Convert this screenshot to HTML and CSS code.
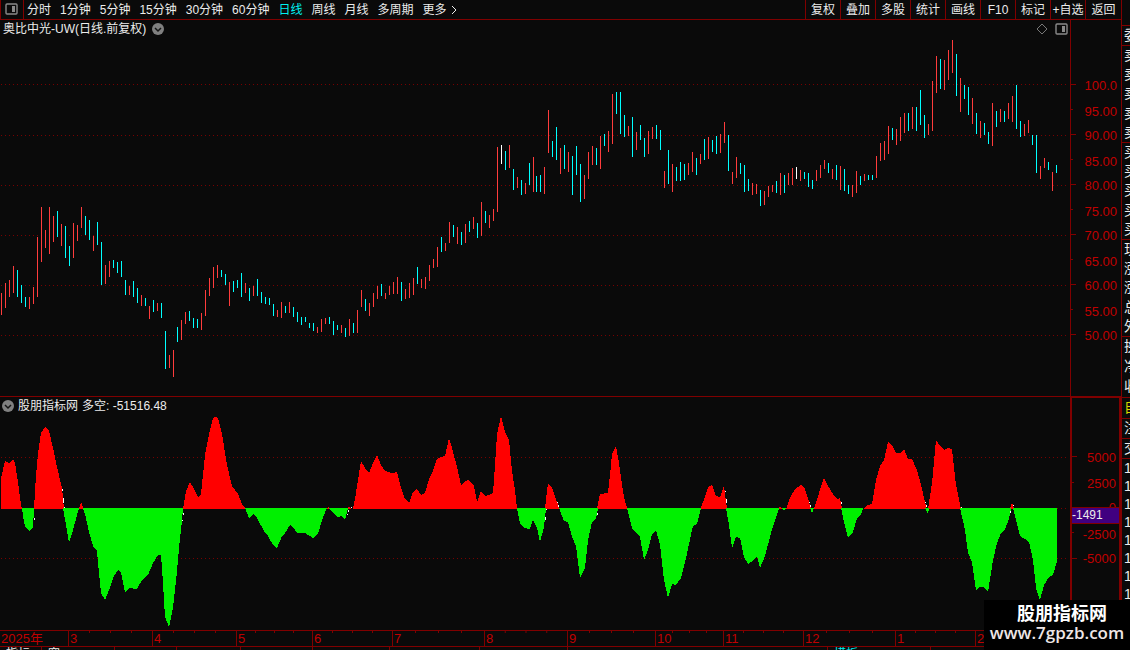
FILE: index.html
```html
<!DOCTYPE html>
<html lang="zh-CN">
<head>
<meta charset="utf-8">
<title>奥比中光-UW 日线</title>
<link rel="stylesheet" href="styles.css">
</head>
<body>
<div class="terminal">
  <main class="workspace">
    <header class="toolbar">
      <button class="layout-toggle" type="button" aria-label="切换布局">
        <svg class="icon-panel" viewBox="0 0 13 12" aria-hidden="true"><rect class="frame" x="1" y="1" width="11" height="10" rx="1"/><rect class="fill" x="7" y="3" width="3" height="6"/></svg>
      </button>
      <nav class="periods">
        <button type="button">分时</button>
        <button type="button">1分钟</button>
        <button type="button">5分钟</button>
        <button type="button">15分钟</button>
        <button type="button">30分钟</button>
        <button type="button">60分钟</button>
        <button type="button" class="active">日线</button>
        <button type="button">周线</button>
        <button type="button">月线</button>
        <button type="button">多周期</button>
        <button type="button" class="more">更多<svg viewBox="0 0 6 10" aria-hidden="true"><path d="M1 1L5 5L1 9"/></svg></button>
      </nav>
      <div class="tools">
        <button type="button">复权</button>
        <button type="button">叠加</button>
        <button type="button">多股</button>
        <button type="button">统计</button>
        <button type="button">画线</button>
        <button type="button">F10</button>
        <button type="button">标记</button>
        <button type="button">+自选</button>
        <button type="button">返回</button>
      </div>
    </header>

    <section class="pane price-pane">
      <div class="plot">
        <div class="legend">
          <span>奥比中光-UW(日线.前复权)</span>
          <button class="round" type="button" aria-label="展开"><svg viewBox="0 0 12 12" aria-hidden="true"><circle cx="6" cy="6" r="6"/><path d="M3 5L6 8L9 5"/></svg></button>
          <span class="legend-actions">
            <svg class="icon-diamond" viewBox="0 0 12 12" aria-hidden="true"><path d="M6 1L11 6L6 11L1 6Z"/></svg>
            <svg class="icon-panel" viewBox="0 0 13 12" aria-hidden="true"><rect class="frame" x="1" y="1" width="11" height="10" rx="1"/><rect class="fill" x="7" y="3" width="3" height="6"/></svg>
          </span>
        </div>
        <svg class="chart" id="price" viewBox="0 38 1070 358" preserveAspectRatio="none" role="img" aria-label="日线价格"></svg>
      </div>
      <div class="axis price-axis">
        <span>100.0</span><span>95.00</span><span>90.00</span><span>85.00</span><span>80.00</span><span>75.00</span><span>70.00</span><span>65.00</span><span>60.00</span><span>55.00</span><span>50.00</span>
      </div>
    </section>

    <section class="pane index-pane">
      <div class="plot">
        <div class="legend">
          <button class="round" type="button" aria-label="指标菜单"><svg viewBox="0 0 12 12" aria-hidden="true"><circle cx="6" cy="6" r="6"/><path d="M3 5L6 8L9 5"/></svg></button>
          <span>股朋指标网</span>
          <span>多空: -51516.48</span>
        </div>
        <svg class="chart" id="index" viewBox="0 414 1070 216" preserveAspectRatio="none" role="img" aria-label="多空指标"></svg>
      </div>
      <div class="axis index-axis">
        <span>5000</span><span>2500</span><span class="zero">0<b class="badge">-1491</b></span><span>-2500</span><span>-5000</span>
      </div>
    </section>

    <div class="months">
      <span>2025年</span><span>3</span><span>4</span><span>5</span><span>6</span><span>7</span><span>8</span><span>9</span><span>10</span><span>11</span><span>12</span><span>1</span><span>2</span>
    </div>
    <div class="tabs">
      <span>指标</span><span>窗</span><span></span><span></span><span></span><span></span><span></span><span></span><span></span><span class="current">模板</span><span></span>
    </div>
  </main>

  <aside class="quotes">
    <div class="group head"><span>委</span></div>
    <div class="group"><span>卖</span><span>卖</span><span>卖</span><span>卖</span><span>卖</span></div>
    <div class="group"><span>买</span><span>买</span><span>买</span><span>买</span><span>买</span></div>
    <div class="group"><span>现</span><span>涨</span><span>涨</span><span>总</span><span>外</span></div>
    <div class="group short"><span>换</span><span>净</span><span>收</span></div>
    <div class="group own"><span>自</span></div>
    <div class="group single"><span>注</span></div>
    <div class="group single"><span>交</span></div>
    <div class="group ticks"><span>1</span><span>1</span><span>1</span><span>1</span><span>1</span><span>1</span><span>1</span><span>1</span></div>
  </aside>

  <div class="watermark"><strong>股朋指标网</strong><span>www.7gpzb.com</span></div>
</div>
<script src="chart.js"></script>
</body>
</html>
```

FILE: styles.css
```css
* { box-sizing: border-box; }

body {
  margin: 0;
  background: #0a0a0a;
  color: #ececec;
  font: 12px/18px "Liberation Sans", "Noto Sans CJK SC", sans-serif;
}

button {
  margin: 0;
  padding: 0;
  border: 0;
  background: none;
  color: inherit;
  font: inherit;
  white-space: nowrap;
}

svg { display: block; }

.terminal {
  position: relative;
  display: grid;
  grid-template-columns: minmax(0, 1fr) 9px;
  height: 100vh;
  overflow: hidden;
}

.workspace {
  display: grid;
  grid-template-rows: 20px minmax(0, 376fr) minmax(0, 234fr) 16px 4px;
  min-width: 0;
}

.toolbar {
  display: flex;
  border-bottom: 1px solid #800000;
}

.layout-toggle {
  display: flex;
  align-items: center;
  justify-content: center;
  width: 24px;
  padding: 0 2px 2px 0;
  border: solid #800000;
  border-width: 0 1px;
}

.icon-panel { width: 13px; height: 12px; }
.icon-panel .frame { fill: none; stroke: #8a8a8a; stroke-width: 1.4; }
.icon-panel .fill { fill: #8a8a8a; }

.periods {
  display: flex;
  gap: 9px;
  padding-left: 3px;
}

.periods .active { color: #00f0f0; }

.more {
  display: flex;
  align-items: center;
  gap: 4px;
}

.more svg {
  width: 6px;
  height: 10px;
  fill: none;
  stroke: #ececec;
}

.tools {
  display: flex;
  margin-left: auto;
}

.tools button {
  width: 35px;
  border-left: 1px solid #800000;
}

.tools button:last-child { width: 36px; }

.pane {
  display: grid;
  grid-template-columns: minmax(0, 1fr) 51px;
  min-height: 0;
}

.index-pane { border-top: 1px solid #800000; }

.plot {
  display: flex;
  flex-direction: column;
  min-height: 0;
}

.legend {
  display: flex;
  flex: none;
  align-items: center;
  gap: 6px;
  height: 18px;
  padding: 0 2px 0 3px;
}

.index-pane .legend {
  gap: 4px;
  height: 17px;
  padding-left: 2px;
}

.round { width: 12px; height: 12px; }
.round circle { fill: #808080; }
.round path { fill: none; stroke: #151515; stroke-width: 1.5; }

.legend-actions {
  display: flex;
  align-items: center;
  gap: 7px;
  margin-left: auto;
}

.icon-diamond {
  width: 12px;
  height: 12px;
  fill: none;
  stroke: #777;
}

.chart {
  flex: 1;
  width: 100%;
  min-height: 0;
  shape-rendering: crispEdges;
}

.chart path { fill: none; stroke-width: 1; }
.chart .grid { stroke: #780000; stroke-dasharray: 1 3; }
.chart .up { stroke: #ff3c3c; }
.chart .down { stroke: #00ffff; }
.chart .flat { stroke: #fff; }
.chart .bull { fill: #ff0000; }
.chart .bear { fill: #00f000; }

.axis {
  display: grid;
  border-left: 1px solid #800000;
  color: #c00000;
  font-size: 13px;
  text-align: right;
}

.axis span {
  display: flex;
  align-items: center;
  justify-content: flex-end;
  min-height: 0;
  padding: 2px 4px 0 0;
  background: linear-gradient(#800000, #800000) left center / 5px 1px no-repeat;
}

.axis span:nth-child(even) {
  padding-top: 4px;
  background-size: 2px 1px;
}

.price-axis {
  grid-template-rows: repeat(11, minmax(0, 25fr));
  padding: 52px 0 49px;
}

.index-axis {
  grid-template-rows: repeat(5, minmax(0, 25fr));
  padding: 46px 0 59px;
  border: solid #800000;
  border-width: 1px 2px 0;
}

.index-axis span { padding-right: 3px; }

.axis .zero { position: relative; }

.badge {
  position: absolute;
  inset: auto 0 -4px 0;
  height: 17px;
  border: solid #800000;
  border-width: 1px 0;
  background: #400080;
  color: #ececec;
  font-size: 12px;
  font-weight: 400;
  line-height: 15px;
  text-align: left;
}

.months {
  display: grid;
  grid-template-columns: 68fr 84fr 84fr 76fr 80fr 92fr 83fr 88fr 68fr 80fr 92fr 80fr 146fr;
  border-top: 1px solid #800000;
  color: #c00000;
  font-size: 13px;
  line-height: 16px;
}

.months span {
  padding-left: 1px;
  border-left: 1px solid #800000;
  background: linear-gradient(90deg, #800000 1px, transparent 1px) left top / 25% 2px repeat-x border-box;
}

.months span:first-child {
  border: 0;
  background: none;
}

.tabs {
  display: grid;
  grid-template-columns: 42fr 73fr 62fr 64fr 72fr 77fr 90fr 88fr 260fr 103fr 190fr;
  height: 4px;
  overflow: hidden;
  border-top: 1px solid #800000;
  line-height: 14px;
}

.tabs span {
  padding-left: 6px;
  border-right: 1px solid #800000;
}

.tabs .current { color: #00f0f0; }

.quotes {
  overflow: hidden;
  padding-top: 25px;
  border-left: 1px solid #800000;
  font-size: 14px;
}

.group {
  display: grid;
  height: 97px;
  padding-left: 2px;
  border-top: 1px solid #800000;
  line-height: 19px;
}

.head { height: 20px; }
.short { height: 61px; }
.own { height: 21px; color: #d8d800; }
.single { height: 20px; }
.ticks { height: 145px; line-height: 18px; }

.watermark {
  position: absolute;
  right: 0;
  bottom: 0;
  width: 146px;
  height: 50px;
  padding-top: 4px;
  background: #000;
  color: #fff;
  text-align: center;
}

.watermark strong {
  display: block;
  padding-left: 10px;
  font-size: 18px;
  line-height: 20px;
}

.watermark span {
  display: block;
  font: 600 17px/18px "Open Sans", "Noto Sans", sans-serif;
  color: #eee6e6;
}
```

FILE: chart.js
```js
const NS = "http://www.w3.org/2000/svg";

// One entry per trading day: direction (r up, c down, w flat), high and low on the plot.
const days = `
r293-315 r283-308 r280-297 r266-293 c270-297 c285-303 c297-307 r297-309 r287-304 r237-297
r207-262 r230-248 r207-254 r216-242 c211-237 r224-246 c226-258 c246-266 r223-258 r225-241
r207-228 c216-235 c220-240 r236-251 c222-245 c242-285 r265-284 r261-277 c260-268 c262-273
c261-277 c280-295 r286-295 c281-297 c288-303 r295-306 c298-306 r306-319 c300-312 r303-311
c303-318 c331-369 r355-368 r350-377 c327-342 r320-340 r312-324 c311-321 c318-328 c319-328
r313-330 r290-316 r278-296 r267-288 r265-278 c270-277 c274-285 r282-306 c281-292 c280-288
c273-297 r283-293 c288-301 r286-296 c279-296 c292-303 c297-304 c298-305 c304-316 r310-317
r302-318 c306-313 r302-313 c307-317 c312-322 c317-325 c317-322 c323-328 c323-331 r327-333
r319-332 r318-324 c317-324 c321-335 c325-330 r325-333 c328-337 r319-336 c323-333 r310-333
r290-307 c299-311 r303-316 r293-307 r286-299 c284-296 r293-299 r286-295 r282-294 r277-294
c282-301 r289-299 r283-298 r278-295 c267-284 r279-288 r277-289 r265-281 r259-268 r247-267
c237-252 r243-251 r222-243 c225-237 r227-244 c232-245 r224-243 c221-232 r217-229 c223-238
r202-236 c211-223 r215-228 r209-221 r147-212 w145-164 c151-170 r145-168 c169-190 r177-188
c180-195 r183-194 c163-185 r157-192 c176-192 c175-192 r167-194 r110-153 c141-157 c127-160
r148-174 c145-169 r152-172 c156-195 c146-175 c164-202 r175-199 r152-179 r146-165 c148-165
r136-169 c134-146 r131-152 r94-144 c92-114 c92-134 c115-137 r126-136 c117-157 r132-150
c125-140 c138-157 r131-154 r127-139 c125-139 c130-150 r171-188 c150-184 r164-192 c167-181
c162-181 c164-180 r163-175 r152-172 c158-175 r154-164 c139-160 r137-159 c140-152 c136-154
r134-153 r122-143 c135-171 r172-184 r157-178 c163-174 c165-192 c179-191 r183-195 r184-194
c190-206 r191-205 r186-197 r185-192 c181-193 r173-195 c175-193 r173-185 r168-185 w167-179
r170-181 c172-179 c173-187 c180-189 r170-181 r165-178 r160-169 c163-173 r169-179 c165-180
r166-190 c169-191 c185-194 r185-197 r171-193 c176-185 r174-181 c175-180 c175-180 r156-178
r143-161 r141-160 r126-154 c128-140 r129-145 r117-141 r113-133 c113-131 r107-129 c107-131
c90-125 c115-138 r124-135 r81-131 r56-93 c59-89 r60-90 r50-80 r40-73 c54-96
r78-112 c85-99 c87-115 r98-124 c113-134 r121-138 c123-135 c132-144 r103-146 c111-127
r109-122 c111-122 r103-119 r96-122 c85-129 c121-137 r124-136 r120-133 c135-145 c135-173
r166-179 r158-168 c162-170 r172-191 c165-173`.trim().split(/\s+/);

const bull = [
  "1,509 1,478 5,461 9,463 13,459 15,463 18,482 21,505 22,509",
  "34,509 36,475 38,454 41,433 45,427 49,431 53,448 57,467 62,488 64,509",
  "79,509 81,502 84,509",
  "183,509 186,491 190,482 193,487 198,497 201,494 205,455 209,434 213,418 215,417 218,418 222,434 227,465 232,486 238,494 242,504 246,509",
  "327,509 328,507 330,509",
  "348,509 349,506 351,509",
  "353,509 355,499 358,480 361,461 365,468 369,473 373,463 377,455 381,465 385,471 392,473 397,472 400,484 404,497 409,503 413,492 417,489 421,495 425,493 429,479 433,471 437,459 441,457 445,456 449,438 452,448 457,467 461,485 465,481 469,480 474,486 477,502 481,491 485,496 489,495 493,493 495,465 497,434 501,416 505,432 509,440 512,471 515,490 517,509",
  "545,509 547,491 548,483 552,488 557,502 560,509",
  "597,509 600,494 608,493 610,475 612,454 616,446 619,463 622,485 625,502 628,509",
  "700,509 704,500 708,487 712,485 716,496 720,497 724,486 727,509",
  "779,509 780,506 782,509",
  "786,509 790,498 795,489 801,485 804,487 808,498 811,509",
  "814,509 818,497 821,486 824,478 828,486 833,494 837,499 840,498 842,509",
  "863,509 867,505 872,504 876,480 880,466 884,460 888,442 892,445 896,453 900,453 904,449 908,459 912,459 917,470 921,485 926,506 927,509",
  "928,509 932,483 936,440 940,446 944,450 948,448 952,449 956,485 961,509",
  "1010,509 1012,502 1014,509"
];

const bear = [
  "22,508 24,522 26,528 29,531 33,528 34,508",
  "63,508 66,525 69,543 73,530 79,508",
  "83,508 85,514 89,532 93,546 97,551 99,573 101,593 105,600 109,590 114,576 118,570 121,572 125,592 129,588 137,589 142,580 148,575 153,563 158,555 161,555 163,583 165,617 169,627 173,608 177,571 179,548 182,520 183,508",
  "245,508 249,518 253,514 257,518 264,531 268,536 273,545 277,548 282,536 285,533 290,525 293,527 297,533 305,533 313,538 318,534 323,517 327,508",
  "329,508 334,514 338,517 341,516 345,520 348,508",
  "517,508 520,523 524,528 530,529 533,520 537,528 540,542 544,527 546,508",
  "559,508 564,521 568,522 572,537 576,546 578,562 580,578 585,568 588,540 592,522 596,519 598,508",
  "627,508 632,528 635,532 640,537 644,560 648,550 652,534 656,530 660,545 664,580 668,598 672,584 676,585 681,578 686,558 692,530 693,526 697,524 701,508",
  "726,508 729,525 732,548 736,537 740,538 744,557 748,564 753,561 757,556 760,568 765,556 771,533 779,508",
  "782,508 784,511 786,508",
  "810,508 812,513 814,508",
  "841,508 844,522 848,538 853,532 857,518 861,515 863,508",
  "925,508 928,514 929,508",
  "960,508 965,530 968,553 972,562 976,590 980,587 984,587 988,592 993,560 997,543 1001,533 1005,529 1009,519 1011,508",
  "1013,508 1020,536 1025,539 1029,542 1033,560 1036,588 1040,600 1044,585 1049,577 1053,575 1057,561 1057,508"
];

// Short white marks where the indicator crosses zero: x, top, bottom.
const marks = [
  [62, 489, 491], [63, 498, 503], [64, 507, 508], [34, 518, 520], [183, 513, 515], [182, 520, 521],
  [348, 510, 512], [347, 514, 515], [351, 507, 508], [545, 517, 520], [546, 509, 510], [557, 502, 503],
  [558, 505, 507], [597, 513, 515], [725, 491, 492], [726, 499, 503], [809, 502, 503], [810, 505, 507],
  [841, 502, 504], [925, 502, 503], [926, 505, 507], [961, 507, 508], [1010, 511, 513], [1013, 505, 506]
];

function draw(svg, tag, attrs) {
  const node = document.createElementNS(NS, tag);
  for (const [key, value] of Object.entries(attrs)) node.setAttribute(key, value);
  svg.append(node);
}

function grid(svg, rows) {
  for (const y of rows) draw(svg, "path", { class: "grid", d: `M1 ${y + 0.5}H1068` });
}

const price = document.getElementById("price");
const index = document.getElementById("index");

grid(price, [84, 135, 185, 235, 285, 335]);
const paths = { r: "", c: "", w: "" };
days.forEach((day, i) => {
  const x = i < 134 ? 4 * i + 1 : 4 * i;
  const [high, low] = day.slice(1).split("-");
  paths[day[0]] += `M${x + 0.5} ${high}V${low}`;
});
draw(price, "path", { class: "up", d: paths.r });
draw(price, "path", { class: "down", d: paths.c });
draw(price, "path", { class: "flat", d: paths.w });

grid(index, [457, 508, 558]);
for (const points of bull) draw(index, "polygon", { class: "bull", points });
for (const points of bear) draw(index, "polygon", { class: "bear", points });
draw(index, "path", { class: "flat", d: marks.map(([x, a, b]) => `M${x + 0.5} ${a}V${b}`).join("") });
```
